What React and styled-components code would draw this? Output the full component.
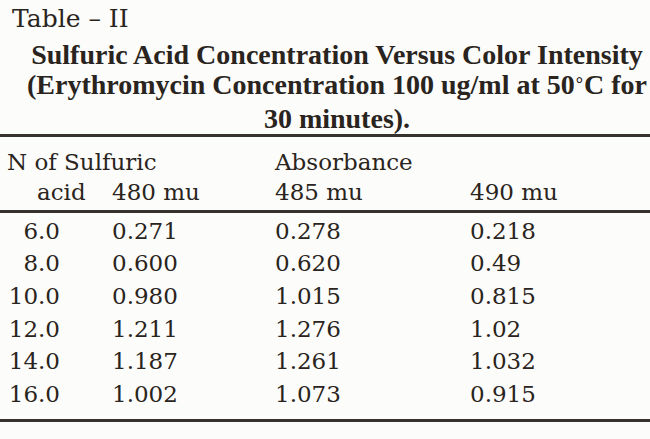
import React from "react";
import styled, { createGlobalStyle } from "styled-components";

const Global = createGlobalStyle`
  html, body { margin: 0; padding: 0; background: #fcfcfa; }
  body { width: 650px; height: 439px; overflow: hidden; }
`;

const Page = styled.div`
  width: 650px;
  height: 439px;
  color: #2a2420;
  font-family: "DejaVu Serif", "Liberation Serif", serif;
  display: flex;
  flex-direction: column;
`;

const Caption = styled.div`
  font-size: 25px;
  line-height: 33px;
  padding: 2px 0 0 12px;
`;

const Title = styled.div`
  font-family: "Liberation Serif", serif;
  font-weight: bold;
  font-size: 28px;
  line-height: 30px;
  text-align: center;
  padding: 5px 0 0 24px;
`;

const TitleLine = styled.div`
  white-space: nowrap;
  margin-top: ${(p) => p.$mt || 0}px;
`;

const Degree = styled.span`
  font-size: 0.65em;
  line-height: 0;
  vertical-align: 0.2em;
  margin: 0 1px;
`;

const Rule = styled.div`
  height: ${(p) => p.$h || 3}px;
  background: #38322e;
  margin-top: ${(p) => p.$mt || 0}px;
`;

const Grid = styled.div`
  display: grid;
  grid-template-columns: 112px 163px 195px 1fr;
  font-size: 23px;
  margin-top: ${(p) => p.$mt || 0}px;
`;

const Cell = styled.div`
  height: ${(p) => p.$h}px;
  line-height: ${(p) => p.$h}px;
  white-space: nowrap;
  text-align: ${(p) => (p.$right ? "right" : "left")};
  padding-right: ${(p) => (p.$right ? 52 : 0)}px;
  padding-left: ${(p) => p.$pl || 0}px;
  grid-column: ${(p) => p.$span || "auto"};
`;

const rows = [
  ["6.0", "0.271", "0.278", "0.218"],
  ["8.0", "0.600", "0.620", "0.49"],
  ["10.0", "0.980", "1.015", "0.815"],
  ["12.0", "1.211", "1.276", "1.02"],
  ["14.0", "1.187", "1.261", "1.032"],
  ["16.0", "1.002", "1.073", "0.915"],
];

export default function App() {
  return (
    <>
      <Global />
      <Page>
        <Caption>Table – II</Caption>
        <Title>
          <TitleLine>Sulfuric Acid Concentration Versus Color Intensity</TitleLine>
          <TitleLine>
            (Erythromycin Concentration 100 ug/ml at 50<Degree>°</Degree>C for
          </TitleLine>
          <TitleLine $mt={4}>30 minutes).</TitleLine>
        </Title>
        <Rule $h={3} />
        <Grid $mt={10}>
          <Cell $h={30} $span="1 / 3" $pl={7}>N of Sulfuric</Cell>
          <Cell $h={30} $span="3 / 5">Absorbance</Cell>
          <Cell $h={30} $pl={37}>acid</Cell>
          <Cell $h={30}>480 mu</Cell>
          <Cell $h={30}>485 mu</Cell>
          <Cell $h={30}>490 mu</Cell>
        </Grid>
        <Rule $mt={3} $h={3} />
        <Grid $mt={1.6}>
          {rows.map((r) => (
            <React.Fragment key={r[0]}>
              <Cell $h={32.7} $right>{r[0]}</Cell>
              <Cell $h={32.7}>{r[1]}</Cell>
              <Cell $h={32.7}>{r[2]}</Cell>
              <Cell $h={32.7}>{r[3]}</Cell>
            </React.Fragment>
          ))}
        </Grid>
        <Rule $mt={8} $h={3} />
      </Page>
    </>
  );
}
